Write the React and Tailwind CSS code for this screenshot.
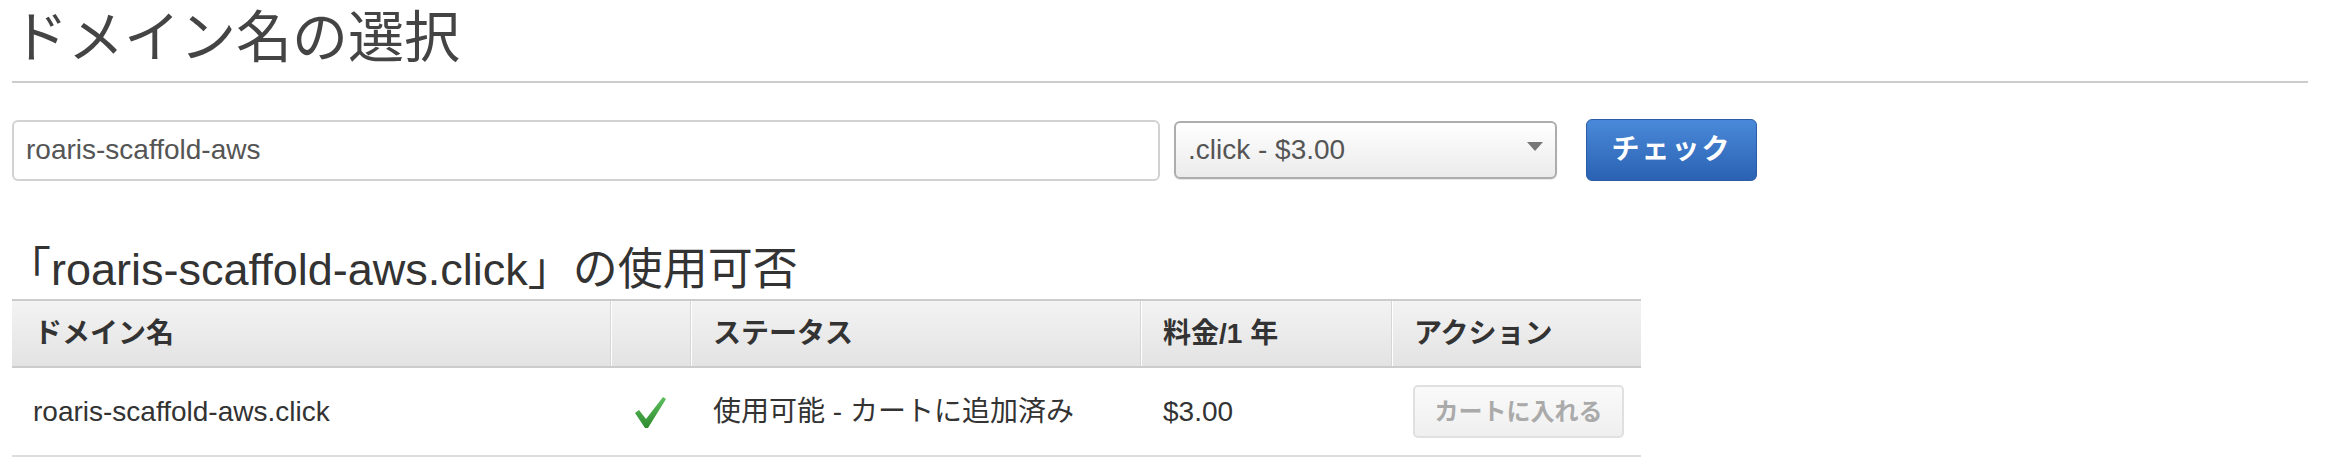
import React from "react";

const Check = () => (
  <svg width="34" height="34" viewBox="0 0 34 34">
    <defs>
      <linearGradient id="chk" x1="0" y1="0" x2="0" y2="1">
        <stop offset="0" stopColor="#5fbf5f" />
        <stop offset="1" stopColor="#2e8b2e" />
      </linearGradient>
    </defs>
    <path d="M1 18 L5 15 L12 24 L29 2 L32 4 L14 33 L11 33 Z" fill="url(#chk)" />
  </svg>
);

const cols = "grid grid-cols-[599px_80px_450px_251px_249px]";

export default function App() {
  return (
    <div className="w-[2344px] h-[474px] bg-white overflow-hidden font-['Liberation_Sans','Noto_Sans_CJK_JP',sans-serif] text-[#333]">
      <div className="w-[2308px] pl-[12px]">
        <h1 className="text-[56px] leading-[76px] text-[#444] font-normal pb-[5px] border-b-2 border-[#ccc]">
          ドメイン名の選択
        </h1>

        <div className="flex items-center mt-[36px] h-[62px]">
          <div className="w-[1148px] h-[61px] border-2 border-[#d2d2d2] rounded-[6px] flex items-center pl-[12px] text-[28px] text-[#555]">
            roaris-scaffold-aws
          </div>
          <div className="ml-[14px] w-[383px] h-[58px] border-2 border-[#adadad] rounded-[6px] bg-gradient-to-b from-white to-[#ebebeb] flex items-center justify-between pl-[12px] pr-[12px] text-[28px] text-[#555] shadow-[0_1px_1px_rgba(0,0,0,0.1)]">
            <span>.click - $3.00</span>
            <span className="w-0 h-0 border-l-[8px] border-r-[8px] border-t-[9px] border-l-transparent border-r-transparent border-t-[#777] mb-[8px]" />
          </div>
          <button className="ml-[29px] w-[171px] h-[62px] rounded-[6px] bg-gradient-to-b from-[#4a89d9] to-[#2b62b3] border border-[#2a5da6] text-white font-bold text-[28px] tracking-[2px]">
            チェック
          </button>
        </div>

        <h2 className="mt-[60px] -ml-[6px] text-[45px] leading-[58px] font-normal text-[#333]">
          「roaris-scaffold-aws.click」の使用可否
        </h2>

        <div className="w-[1629px]">
          <div className={`${cols} h-[69px] border-t-2 border-b-2 border-[#ccc] bg-gradient-to-b from-[#f3f3f3] to-[#e3e3e3] text-[28px] font-bold text-[#333]`}>
            <div className="flex items-center pl-[22px] border-r border-[#d6d6d6]">ドメイン名</div>
            <div className="border-l border-r border-l-white border-r-[#d6d6d6]" />
            <div className="flex items-center pl-[21px] border-l border-r border-l-white border-r-[#d6d6d6]">ステータス</div>
            <div className="flex items-center pl-[21px] border-l border-r border-l-white border-r-[#d6d6d6]">料金/1 年</div>
            <div className="flex items-center pl-[21px] border-l border-l-white">アクション</div>
          </div>
          <div className={`${cols} h-[89px] border-b-2 border-[#ddd] text-[28px]`}>
            <div className="flex items-center pl-[21px]">roaris-scaffold-aws.click</div>
            <div className="flex items-center justify-center">
              <Check />
            </div>
            <div className="flex items-center pl-[22px]">使用可能 - カートに追加済み</div>
            <div className="flex items-center pl-[22px]">$3.00</div>
            <div className="flex items-center pl-[21px]">
              <button className="w-[211px] h-[53px] rounded-[5px] border-2 border-[#e0e0e0] bg-gradient-to-b from-[#fafafa] to-[#efefef] text-[#aaa] font-bold text-[24px]">
                カートに入れる
              </button>
            </div>
          </div>
        </div>
      </div>
    </div>
  );
}
